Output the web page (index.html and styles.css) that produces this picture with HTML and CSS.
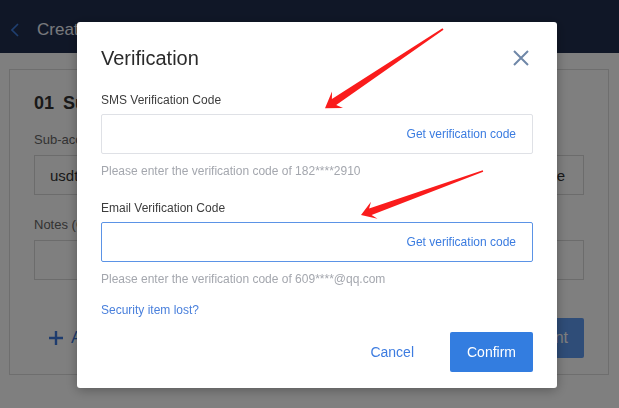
FILE: index.html
```html
<!DOCTYPE html>
<html>
<head>
<meta charset="utf-8">
<link rel="stylesheet" href="styles.css">
</head>
<body>
<div class="page">
  <header class="topbar">
    <svg class="back" width="8" height="14" viewBox="0 0 8 14"><path d="M7 1 L1 7 L7 13" fill="none" stroke="#3f7ee0" stroke-width="1.6"/></svg>
    <span class="topbar-title">Create Sub-account</span>
  </header>
  <main class="content">
    <section class="card">
      <h2 class="step"><span class="num">01</span> Sub-account Information</h2>
      <div class="flabel">Sub-account name</div>
      <div class="frow">
        <div class="finput">usdt_sub01</div>
        <div class="fbtn">Generate</div>
      </div>
      <div class="flabel second">Notes (Optional)</div>
      <div class="frow">
        <div class="finput"></div>
      </div>
      <div class="actions">
        <span class="add"><svg width="14" height="14" viewBox="0 0 14 14"><path d="M7 0 V14 M0 7 H14" stroke="#3c78dc" stroke-width="2.4"/></svg> Add more</span>
        <span class="submit">Create Sub-account</span>
      </div>
    </section>
  </main>
</div>

<div class="mask"></div>

<div class="dialog">
  <div class="dlg-head">
    <h1 class="dlg-title">Verification</h1>
    <svg class="close" width="16" height="16" viewBox="0 0 16 16"><path d="M1 1 L15 15 M15 1 L1 15" stroke="#6f87a8" stroke-width="2"/></svg>
  </div>
  <div class="field">
    <div class="label">SMS Verification Code</div>
    <div class="input">
      <span class="getcode">Get verification code</span>
    </div>
    <div class="hint">Please enter the verification code of 182****2910</div>
  </div>
  <div class="field">
    <div class="label">Email Verification Code</div>
    <div class="input focused">
      <span class="getcode">Get verification code</span>
    </div>
    <div class="hint">Please enter the verification code of 609****@qq.com</div>
  </div>
  <div class="lost">Security item lost?</div>
  <div class="dlg-foot">
    <span class="cancel">Cancel</span>
    <span class="confirm">Confirm</span>
  </div>
</div>

<svg class="arrows" width="619" height="408" viewBox="0 0 619 408">
  <polygon fill="#fa1c1c" points="442.5,28.3 443.5,29.7 336.2,104.9 343,108 325,108.3 332,91.6 331.9,99"/>
  <polygon fill="#fa1c1c" points="482.8,170.3 483.2,171.7 371.6,214.9 377.5,218.8 361,215 371,201.8 369.1,208.4"/>
</svg>
</body>
</html>
```

FILE: styles.css
```css
* { box-sizing: border-box; }

body {
  margin: 0;
  width: 619px;
  height: 408px;
  overflow: hidden;
  font-family: "Liberation Sans", Arial, sans-serif;
  background: #ffffff;
}

.topbar {
  height: 53px;
  background: #212f4f;
  display: flex;
  align-items: center;
  padding: 6px 0 0 11px;
  gap: 18px;
}

.topbar-title {
  color: #f0f3fa;
  font-size: 17px;
}

.content {
  padding: 16px 10px 0 9px;
}

.card {
  height: 306px;
  border: 1px solid #dcdcdc;
  background: #fff;
  padding: 21px 24px 16px;
  display: flex;
  flex-direction: column;
}

.step {
  margin: 0;
  font-size: 18px;
  line-height: 24px;
  color: #333;
  font-weight: bold;
}

.num { margin-right: 4px; }

.flabel {
  margin-top: 16px;
  font-size: 13px;
  line-height: 18px;
  color: #666;
}

.flabel.second { margin-top: 21px; }

.flabel + .frow { margin-top: 6px; }

.frow {
  display: flex;
  gap: 10px;
}

.finput {
  flex: 1;
  height: 40px;
  border: 1px solid #d8d8d8;
  padding: 0 15px;
  display: flex;
  align-items: center;
  font-size: 15px;
  color: #333;
}

.fbtn {
  width: 100px;
  height: 40px;
  border: 1px solid #d8d8d8;
  display: flex;
  align-items: center;
  justify-content: flex-end;
  padding-right: 18px;
  font-size: 15px;
  color: #333;
}

.actions {
  margin-top: auto;
  display: flex;
  justify-content: space-between;
  align-items: center;
}

.add {
  display: flex;
  align-items: center;
  gap: 8px;
  margin-left: 15px;
  color: #3c78dc;
  font-size: 17px;
}

.submit {
  height: 40px;
  padding: 0 16px;
  background: #5e9af0;
  color: #fff;
  display: flex;
  align-items: center;
  font-size: 16px;
  border-radius: 2px;
}

.mask {
  position: fixed;
  inset: 0;
  background: rgba(0, 0, 0, 0.5);
}

.dialog {
  position: fixed;
  left: 77px;
  top: 22px;
  width: 480px;
  background: #fff;
  border-radius: 3px;
  padding: 22px 24px 16px;
  box-shadow: 0 2px 12px rgba(0, 0, 0, 0.3);
}

.dlg-head {
  display: flex;
  justify-content: space-between;
  align-items: center;
  height: 28px;
}

.dlg-title {
  margin: 0;
  font-size: 20px;
  line-height: 28px;
  font-weight: normal;
  color: #2b2b2b;
}

.close { margin-right: 4px; }

.field { margin-top: 19px; }

.label {
  font-size: 12px;
  line-height: 18px;
  color: #3d3d3d;
}

.input {
  margin-top: 5px;
  height: 40px;
  border: 1px solid #dfe1e6;
  border-radius: 2px;
  display: flex;
  align-items: center;
  justify-content: flex-end;
  padding-right: 16px;
}

.input.focused { border-color: #5b93e6; }

.getcode {
  font-size: 12px;
  color: #3b7ce0;
}

.hint {
  margin-top: 8px;
  font-size: 12px;
  line-height: 18px;
  color: #a4a7ae;
}

.lost {
  margin-top: 13px;
  font-size: 12px;
  line-height: 18px;
  color: #4a80dc;
}

.dlg-foot {
  margin-top: 13px;
  display: flex;
  justify-content: flex-end;
  align-items: center;
}

.cancel {
  font-size: 14px;
  color: #3d7ce0;
  margin-right: 36px;
}

.confirm {
  width: 83px;
  height: 40px;
  background: #337de0;
  color: #fff;
  font-size: 14px;
  border-radius: 2px;
  display: flex;
  align-items: center;
  justify-content: center;
}

.arrows {
  position: fixed;
  left: 0;
  top: 0;
  pointer-events: none;
}
```
